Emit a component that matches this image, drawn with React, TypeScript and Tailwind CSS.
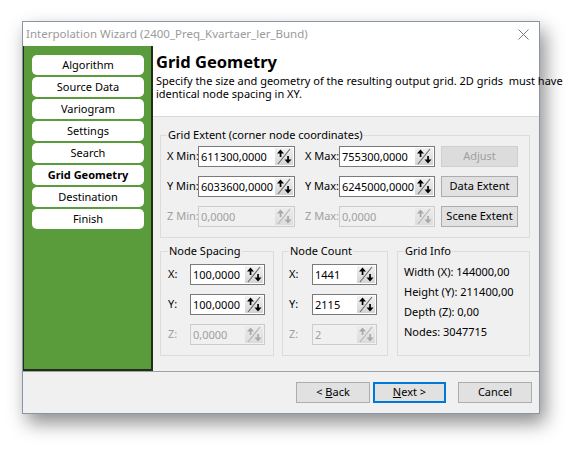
import * as React from 'react';

const steps = ['Algorithm', 'Source Data', 'Variogram', 'Settings', 'Search', 'Grid Geometry', 'Destination', 'Finish'];

function SpinIcon(p: { disabled?: boolean }) {
  const arrow = p.disabled ? '#a8a8a8' : '#000000';
  const line = p.disabled ? '#b4b4b4' : '#6e6e6e';
  return (
    <svg width="18" height="17" viewBox="0 0 18 17" className="shrink-0">
      <defs>
        <linearGradient id={p.disabled ? 'spinD' : 'spinE'} x1="0" y1="0" x2="0" y2="1">
          <stop offset="0" stopColor={p.disabled ? '#ececec' : '#f2f2f2'} />
          <stop offset="1" stopColor={p.disabled ? '#dcdcdc' : '#d4d4d4'} />
        </linearGradient>
      </defs>
      <rect x="0" y="0" width="18" height="17" fill={`url(#${p.disabled ? 'spinD' : 'spinE'})`} />
      <line x1="3" y1="16" x2="15" y2="1" stroke={line} strokeWidth="1.2" />
      <polygon points="2,5.5 5.5,1.5 9,5.5" fill={arrow} />
      <rect x="4.7" y="5" width="1.7" height="4" fill={arrow} />
      <polygon points="9.5,11.5 13,15.5 16.5,11.5" fill={arrow} />
      <rect x="12.2" y="8" width="1.7" height="4" fill={arrow} />
    </svg>
  );
}

interface SpinProps {
  value: string,
  width: string,
  disabled?: boolean,
}

function SpinBox(p: SpinProps) {
  return (
    <div
      className={`${p.width} shrink-0 h-[21px] flex items-center justify-between pl-[2px] pr-[1px] border ${
        p.disabled ? 'bg-[#f0f0f0] border-[#cccccc] text-[#a0a0a0]' : 'bg-white border-[#7a7a7a] text-black'
      }`}
    >
      <span className="leading-none">{p.value}</span>
      <SpinIcon disabled={p.disabled} />
    </div>
  );
}

function Button(p: { children: React.ReactNode, width: string, disabled?: boolean, focused?: boolean }) {
  let cls = 'border border-[#adadad] bg-[#e1e1e1] text-black';
  if (p.disabled) cls = 'border border-[#cfcfcf] bg-[#dcdcdc] text-[#a0a0a0]';
  if (p.focused) cls = 'border-2 border-[#0078d7] bg-[#e1e1e1] text-black';
  return (
    <div className={`${p.width} h-[21px] flex items-center justify-center ${cls}`}>
      {p.children}
    </div>
  );
}

function Group(p: { title: string, className: string, children: React.ReactNode }) {
  return (
    <fieldset className={`border border-[#dcdcdc] min-w-0 ${p.className}`}>
      <legend className="px-[1px] leading-[14px]">{p.title}</legend>
      {p.children}
    </fieldset>
  );
}

function Sidebar() {
  return (
    <div className="w-[130px] shrink-0 bg-[#5a9b3c] border-l border-r-2 border-b-2 border-[#1f2f1c] flex flex-col gap-[2px] pt-[9px] pl-[8px] pr-[7px]">
      {steps.map((s) => (
        <div
          key={s}
          className={`h-[20px] rounded-[5px] bg-white flex items-center justify-center ${
            s === 'Grid Geometry' ? 'font-bold' : ''
          }`}
        >
          {s}
        </div>
      ))}
    </div>
  );
}

function ExtentRow(p: { a: string, av: string, b: string, bv: string, disabled?: boolean, button: React.ReactNode }) {
  const lbl = p.disabled ? 'text-[#a0a0a0]' : '';
  return (
    <div className="flex items-center h-[21px]">
      <span className={`w-[31px] shrink-0 ${lbl}`}>{p.a}</span>
      <SpinBox value={p.av} width="w-[97px]" disabled={p.disabled} />
      <span className={`w-[34px] shrink-0 ml-[10px] ${lbl}`}>{p.b}</span>
      <SpinBox value={p.bv} width="w-[96px]" disabled={p.disabled} />
      <div className="ml-[6px]">{p.button}</div>
    </div>
  );
}

function SmallRow(p: { label: string, value: string, width: string, labelW: string, disabled?: boolean }) {
  return (
    <div className="flex items-center h-[21px]">
      <span className={`${p.labelW} shrink-0 ${p.disabled ? 'text-[#a0a0a0]' : ''}`}>{p.label}</span>
      <SpinBox value={p.value} width={p.width} disabled={p.disabled} />
    </div>
  );
}

function GridPage() {
  return (
    <div className="flex-1 min-w-0 flex flex-col">
      <div className="h-[71px] bg-white border-b border-[#d9d9d9] pl-[3px] pt-[6px]">
        <div className="text-[16.5px] leading-[20px] font-bold">Grid Geometry</div>
        <div className="leading-[13px] whitespace-pre mt-[2px]">
          {'Specify the size and geometry of the resulting output grid. 2D grids  must have\nidentical node spacing in XY.'}
        </div>
      </div>

      <Group title="Grid Extent (corner node coordinates)" className="mt-[11px] ml-[7px] mr-[9px] pl-[6px] pt-[4px] pb-[10px]">
        <div className="flex flex-col gap-[9px]">
          <ExtentRow a="X Min:" av="611300,0000" b="X Max:" bv="755300,0000" button={<Button width="w-[77px]" disabled>Adjust</Button>} />
          <ExtentRow a="Y Min:" av="6033600,0000" b="Y Max:" bv="6245000,0000" button={<Button width="w-[77px]">Data Extent</Button>} />
          <ExtentRow a="Z Min:" av="0,0000" b="Z Max:" bv="0,0000" disabled button={<Button width="w-[77px]">Scene Extent</Button>} />
        </div>
      </Group>

      <div className="flex mt-[6px] ml-[7px] mr-[9px] gap-[8px]">
        <Group title="Node Spacing" className="w-[114px] shrink-0 pl-[7px] pt-[6px] pb-[10px]">
          <div className="flex flex-col gap-[9px]">
            <SmallRow label="X:" value="100,0000" width="w-[75px]" labelW="w-[22px]" />
            <SmallRow label="Y:" value="100,0000" width="w-[75px]" labelW="w-[22px]" />
            <SmallRow label="Z:" value="0,0000" width="w-[75px]" labelW="w-[22px]" disabled />
          </div>
        </Group>
        <Group title="Node Count" className="w-[106px] shrink-0 pl-[6px] pt-[6px] pb-[10px]">
          <div className="flex flex-col gap-[9px]">
            <SmallRow label="X:" value="1441" width="w-[65px]" labelW="w-[23px]" />
            <SmallRow label="Y:" value="2115" width="w-[65px]" labelW="w-[23px]" />
            <SmallRow label="Z:" value="2" width="w-[65px]" labelW="w-[23px]" disabled />
          </div>
        </Group>
        <Group title="Grid Info" className="flex-1 ml-[1px] pl-[6px] pt-[4px]">
          <div className="flex flex-col leading-[20px]">
            <span>Width (X): 144000,00</span>
            <span>Height (Y): 211400,00</span>
            <span>Depth (Z): 0,00</span>
            <span>Nodes: 3047715</span>
          </div>
        </Group>
      </div>
    </div>
  );
}

export default function App() {
  return (
    <div
      className="w-[582px] h-[456px] bg-white overflow-hidden pt-[21px] pl-[22px] text-[11px] text-black whitespace-nowrap"
      style={{ fontFamily: '"Noto Sans", sans-serif' }}
    >
      <div className="w-[518px] h-[393px] border border-[#8795a4] bg-[#f0f0f0] flex flex-col shadow-[5px_9px_18px_rgba(0,0,0,0.45)]">
        <div className="h-[24px] shrink-0 bg-white flex items-center justify-between pl-[3px] pr-[10px]">
          <span className="text-[#9a9a9a] text-[11.5px]">Interpolation Wizard (2400_Preq_Kvartaer_ler_Bund)</span>
          <svg width="11" height="11" viewBox="0 0 11 11">
            <path d="M0.5 0.5 L10.5 10.5 M10.5 0.5 L0.5 10.5" stroke="#7a7a7a" strokeWidth="1" />
          </svg>
        </div>
        <div className="flex h-[325px] shrink-0">
          <Sidebar />
          <GridPage />
        </div>
        <div className="flex-1 border-t border-[#a0a0a0] flex justify-end pt-[10px] pr-[7px]">
          <Button width="w-[74px]">
            <span>&lt; <u>B</u>ack</span>
          </Button>
          <div className="ml-[3px]">
            <Button width="w-[73px]" focused>
              <span><u>N</u>ext &gt;</span>
            </Button>
          </div>
          <div className="ml-[12px]">
            <Button width="w-[74px]">Cancel</Button>
          </div>
        </div>
      </div>
    </div>
  );
}
